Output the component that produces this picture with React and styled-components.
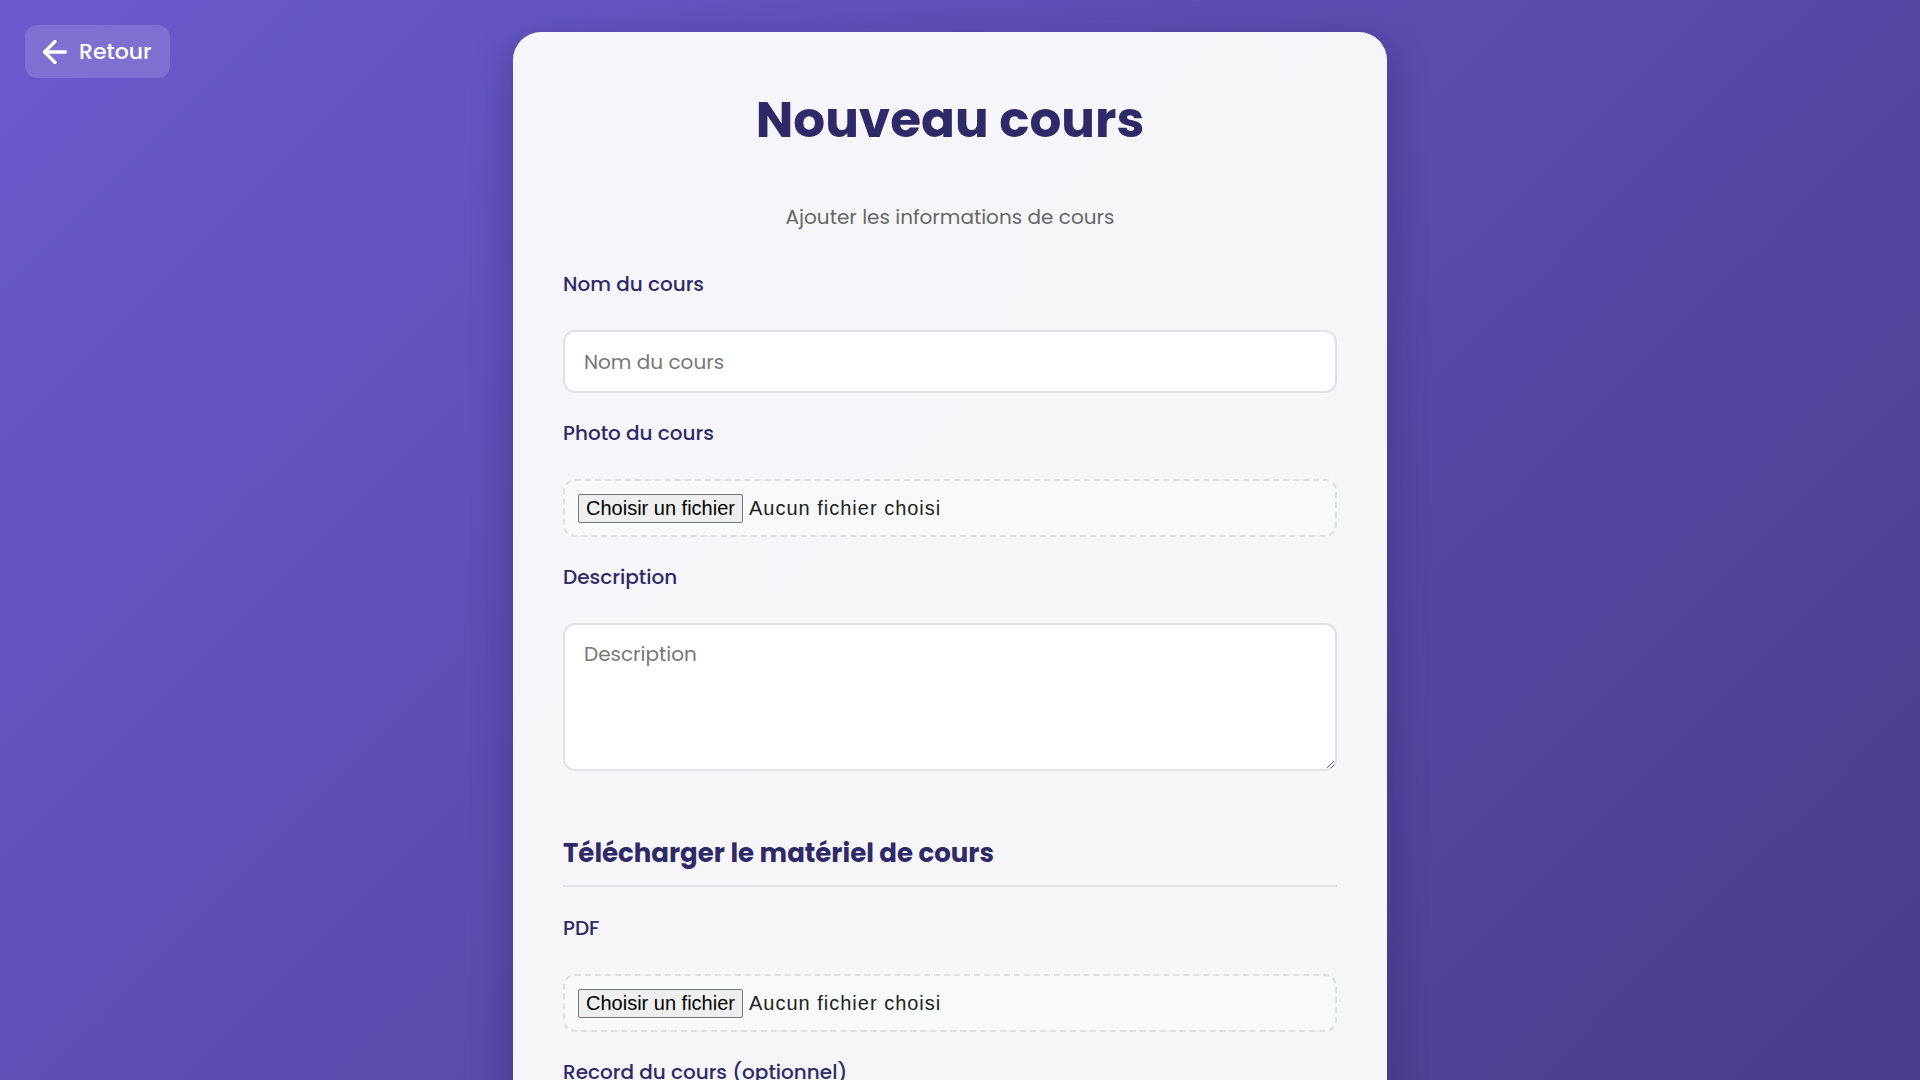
import { useState } from 'react';
import styled, { createGlobalStyle } from 'styled-components';

const GlobalStyle = createGlobalStyle`
  * { box-sizing: border-box; }
  html {
    overflow-y: scroll;
  }
  html, body {
    margin: 0;
    padding: 0;
  }
  body {
    font-family: "Poppins", "Inter", "Noto Sans", sans-serif;
    background: linear-gradient(135deg, #6a5acd 0%, #483d8b 100%);
    background-attachment: fixed;
    min-height: 100vh;
  }
`;

const Page = styled.div`
  position: relative;
  min-height: 100vh;
  padding: 32px 40px 40px 20px;
  display: flex;
  justify-content: center;
`;

const BackButton = styled.button`
  position: absolute;
  top: 25px;
  left: 25px;
  height: 53px;
  padding: 0 19px 0 18px;
  display: inline-flex;
  align-items: center;
  gap: 12px;
  border: 0;
  border-radius: 12px;
  background: rgba(255, 255, 255, 0.15);
  color: #fff;
  font-family: inherit;
  font-size: 22px;
  font-weight: 500;
  cursor: pointer;
`;

const Card = styled.div`
  width: 874px;
  background: linear-gradient(135deg, #f6f6fa 0%, #f6f6f9 60%, #f7f7fa 100%);
  border-radius: 28px;
  box-shadow: 0 12px 40px rgba(20, 10, 60, 0.28);
  padding: 56px 50px 50px;
`;

const Title = styled.h1`
  margin: 0;
  text-align: center;
  font-size: 50px;
  line-height: 64px;
  font-weight: 700;
  color: #2e2a68;
`;

const Subtitle = styled.p`
  margin: 50px 0 38px;
  text-align: center;
  font-size: 20px;
  line-height: 30px;
  color: #666;
`;

const Field = styled.div`
  display: flex;
  flex-direction: column;
  margin-bottom: 26px;
`;

const Label = styled.label`
  font-size: 20px;
  line-height: 28px;
  font-weight: 500;
  color: #2e2a68;
  margin-bottom: 32px;
`;

const TextInput = styled.input`
  height: 63px;
  border: 2px solid #e1e1e4;
  border-radius: 12px;
  background: #fff;
  padding: 0 19px;
  font-family: inherit;
  font-size: 20px;
  color: #222;
  outline: none;
  &::placeholder { color: #777; }
`;

const TextArea = styled.textarea`
  height: 148px;
  border: 2px solid #e1e1e4;
  border-radius: 12px;
  background: #fff;
  padding: 14px 19px;
  font-family: inherit;
  font-size: 20px;
  line-height: 30px;
  color: #222;
  outline: none;
  resize: vertical;
  &::placeholder { color: #777; }
`;

const FileBox = styled.label`
  height: 58px;
  border: 2px dashed #dedee3;
  border-radius: 12px;
  background: #f8f9fb;
  padding: 0 13px;
  display: flex;
  align-items: center;
  gap: 6px;
  font-family: "Liberation Sans", Arial, sans-serif;
  font-size: 20px;
  color: #222;
  cursor: pointer;
  input { display: none; }
`;

const FileButton = styled.span`
  height: 29px;
  padding: 0 7px;
  display: inline-flex;
  align-items: center;
  background: #efefef;
  border: 1px solid #767676;
  border-radius: 2px;
  color: #000;
`;

const FileName = styled.span`
  color: #222;
  letter-spacing: 1px;
`;

const SectionTitle = styled.h2`
  margin: 64px 0 27px;
  padding-bottom: 14px;
  border-bottom: 2px solid #e1e1e6;
  font-size: 26px;
  line-height: 36px;
  font-weight: 700;
  color: #2e2a68;
`;

const Row = styled.div`
  display: grid;
  grid-template-columns: 1fr 1fr;
  gap: 16px;
`;

const SecondaryButton = styled.button`
  align-self: flex-start;
  height: 48px;
  padding: 0 22px;
  border: 2px solid #6a5acd;
  border-radius: 12px;
  background: transparent;
  color: #6a5acd;
  font-family: inherit;
  font-size: 17px;
  font-weight: 600;
  cursor: pointer;
`;

const SubmitButton = styled.button`
  width: 100%;
  height: 60px;
  margin-top: 20px;
  border: 0;
  border-radius: 12px;
  background: linear-gradient(135deg, #6a5acd 0%, #483d8b 100%);
  color: #fff;
  font-family: inherit;
  font-size: 20px;
  font-weight: 600;
  cursor: pointer;
`;

const BackArrow = () => (
  <svg width="24" height="24" viewBox="4 4 16 16" fill="none" stroke="currentColor" strokeWidth="2.2" strokeLinecap="round" strokeLinejoin="round">
    <path d="M19 12H5" />
    <path d="M12 19l-7-7 7-7" />
  </svg>
);

const FileField = ({ label, accept }) => {
  const [name, setName] = useState('');
  return (
    <Field>
      <Label as="span">{label}</Label>
      <FileBox>
        <input type="file" accept={accept} onChange={(e) => setName(e.target.files?.[0]?.name || '')} />
        <FileButton>Choisir un fichier</FileButton>
        <FileName>{name || 'Aucun fichier choisi'}</FileName>
      </FileBox>
    </Field>
  );
};

const App = () => {
  return (
    <>
      <GlobalStyle />
      <Page>
        <BackButton>
          <BackArrow />
          Retour
        </BackButton>
        <Card>
          <Title>Nouveau cours</Title>
          <Subtitle>Ajouter les informations de cours</Subtitle>

          <Field>
            <Label>Nom du cours</Label>
            <TextInput placeholder="Nom du cours" />
          </Field>

          <FileField label="Photo du cours" accept="image/*" />

          <Field>
            <Label>Description</Label>
            <TextArea placeholder="Description" />
          </Field>

          <SectionTitle>Télécharger le matériel de cours</SectionTitle>

          <FileField label="PDF" accept="application/pdf" />
          <FileField label="Record du cours (optionnel)" accept="video/*" />
          <FileField label="Vidéo du cours (optionnel)" accept="video/*" />

          <SectionTitle>Quiz du cours</SectionTitle>

          <Field>
            <Label>Question 1</Label>
            <TextInput placeholder="Saisir la question" />
          </Field>
          <Field>
            <Label>Réponses</Label>
            <Row>
              <TextInput placeholder="Réponse A" />
              <TextInput placeholder="Réponse B" />
              <TextInput placeholder="Réponse C" />
              <TextInput placeholder="Réponse D" />
            </Row>
          </Field>
          <Field>
            <SecondaryButton>+ Ajouter une question</SecondaryButton>
          </Field>

          <SubmitButton>Créer le cours</SubmitButton>
        </Card>
      </Page>
    </>
  );
};

export default App;
